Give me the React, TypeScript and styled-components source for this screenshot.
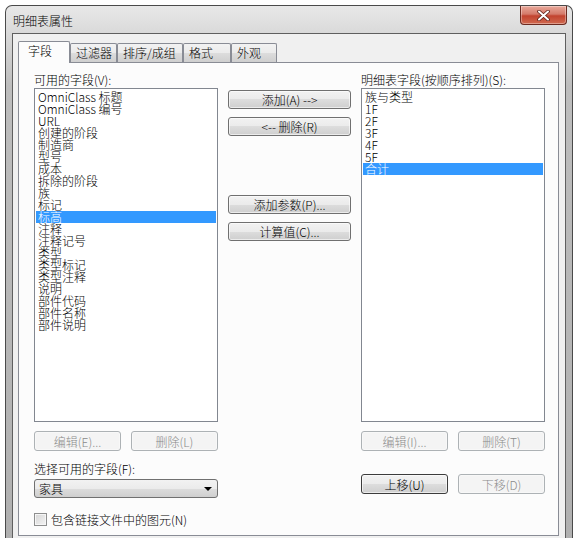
import React from 'react';
import styled, { createGlobalStyle } from 'styled-components';

const GlobalStyle = createGlobalStyle`
  html, body {
    margin: 0;
    padding: 0;
    background: #ffffff;
    overflow: hidden;
  }

  body {
    font-family: "Noto Sans CJK SC", "Liberation Sans", sans-serif;
    font-size: 12px;
    font-weight: 300;
    color: #000000;
  }
`;

const Window = styled.div`
  box-sizing: border-box;
  display: flex;
  flex-direction: column;
  width: 568px;
  height: 545px;
  margin: 5px 0 0 5px;
  padding: 0 6px;
  border: 1px solid #4a4a4a;
  border-bottom: none;
  border-radius: 7px 7px 0 0;
  background: linear-gradient(180deg, #e8e8e8 0px, #d9d9d9 28px, #bdbdbd 80px, #b0b0b0 100%);
`;

const TitleBar = styled.div`
  display: flex;
  justify-content: space-between;
  align-items: flex-start;
  height: 27px;
  margin-right: -1px;
`;

const Title = styled.div`
  padding: 8px 0 0 1px;
  line-height: 14px;
  font-size: 12px;
`;

const CloseButton = styled.div`
  display: flex;
  align-items: center;
  justify-content: center;
  width: 47px;
  height: 19px;
  box-sizing: border-box;
  border: 1px solid #6b2a20;
  border-top: none;
  border-radius: 0 0 4px 4px;
  background: linear-gradient(180deg, #e9a99b 0%, #d47a6a 45%, #c2432f 55%, #d06a50 100%);
  box-shadow: inset 0 0 0 1px rgba(255, 255, 255, 0.35);
`;

const Client = styled.div`
  flex: 1;
  box-sizing: border-box;
  padding: 7px 6px 0 5px;
  border: 1px solid #5f5f5f;
  border-bottom: none;
  background: #f0f0f0;
`;

const TabRow = styled.div`
  display: flex;
  align-items: flex-end;
  height: 21px;
`;

const Tab = styled.div<{ $active?: boolean; $width: number }>`
  position: relative;
  box-sizing: border-box;
  width: ${p => p.$width}px;
  height: ${p => (p.$active ? 22 : 19)}px;
  margin-bottom: ${p => (p.$active ? -1 : 0)}px;
  padding-left: ${p => (p.$active ? 9 : 5)}px;
  border: 1px solid #898c95;
  border-bottom: none;
  border-radius: 2px 2px 0 0;
  line-height: ${p => (p.$active ? 18 : 17)}px;
  white-space: nowrap;
  z-index: ${p => (p.$active ? 1 : 0)};
  background: ${p =>
    p.$active
      ? '#fcfcfc'
      : 'linear-gradient(180deg, #f2f2f2 0%, #ebebeb 50%, #dddddd 50%, #cfcfcf 100%)'};
`;

const Panel = styled.div`
  box-sizing: border-box;
  display: grid;
  grid-template-columns: 184px 123px 184px;
  column-gap: 10px;
  width: 541px;
  height: 474px;
  padding: 10px 12px 0 15px;
  border: 1px solid #898c95;
  background: #fcfcfc;
`;

const Column = styled.div<{ $top?: number }>`
  display: flex;
  flex-direction: column;
  padding-top: ${p => p.$top ?? 0}px;
`;

const Label = styled.div<{ $gap?: number }>`
  height: 15px;
  margin-top: ${p => p.$gap ?? 0}px;
  line-height: 14px;
  white-space: nowrap;
`;

const ListBox = styled.div`
  box-sizing: border-box;
  height: 334px;
  padding: 2px 1px;
  border: 1px solid #828790;
  background: #ffffff;
  overflow: hidden;
`;

const Item = styled.div<{ $selected?: boolean }>`
  height: 12px;
  padding-left: 2px;
  line-height: 12px;
  font-size: 12px;
  white-space: nowrap;
  color: ${p => (p.$selected ? '#ffffff' : '#000000')};
  background: ${p => (p.$selected ? '#3399ff' : 'transparent')};
`;

const Button = styled.div<{ $disabled?: boolean; $height?: number; $gap?: number; $strong?: boolean }>`
  box-sizing: border-box;
  display: flex;
  align-items: center;
  justify-content: center;
  height: ${p => p.$height ?? 19}px;
  margin-top: ${p => p.$gap ?? 0}px;
  border: 1px solid ${p => (p.$disabled ? '#adb2b5' : p.$strong ? '#3c3c3c' : '#707070')};
  border-radius: 3px;
  white-space: nowrap;
  color: ${p => (p.$disabled ? '#8a8a8a' : '#000000')};
  background: ${p =>
    p.$disabled
      ? '#f4f4f4'
      : 'linear-gradient(180deg, #f2f2f2 0%, #ebebeb 50%, #dddddd 50%, #cfcfcf 100%)'};
  box-shadow: inset 0 0 0 1px ${p => (p.$disabled ? '#f8f8f8' : 'rgba(255, 255, 255, 0.6)')};
`;

const ButtonPair = styled.div<{ $gap: number }>`
  display: grid;
  grid-template-columns: 1fr 1fr;
  column-gap: 10px;
  margin-top: ${p => p.$gap}px;
`;

const Dropdown = styled.div`
  box-sizing: border-box;
  display: flex;
  align-items: center;
  justify-content: space-between;
  height: 19px;
  margin-top: 2px;
  padding: 0 4px 0 4px;
  border: 1px solid #707070;
  border-radius: 3px;
  background: linear-gradient(180deg, #f2f2f2 0%, #ebebeb 50%, #dddddd 50%, #cfcfcf 100%);
`;

const Arrow = styled.span`
  width: 0;
  height: 0;
  margin-right: 1px;
  border-left: 4px solid transparent;
  border-right: 4px solid transparent;
  border-top: 4px solid #000000;
`;

const CheckRow = styled.div`
  display: flex;
  align-items: center;
  gap: 4px;
  margin-top: 15px;
  height: 13px;
  line-height: 13px;
  white-space: nowrap;
`;

const CheckBox = styled.span`
  box-sizing: border-box;
  width: 13px;
  height: 13px;
  border: 1px solid #8e8f8f;
  background: linear-gradient(135deg, #d6d6d6 0%, #f4f4f4 100%);
  box-shadow: inset 0 0 0 1px #f6f6f6;
`;

const available = [
  'OmniClass 标题',
  'OmniClass 编号',
  'URL',
  '创建的阶段',
  '制造商',
  '型号',
  '成本',
  '拆除的阶段',
  '族',
  '标记',
  '标高',
  '注释',
  '注释记号',
  '类型',
  '类型标记',
  '类型注释',
  '说明',
  '部件代码',
  '部件名称',
  '部件说明'
];

const scheduled = ['族与类型', '1F', '2F', '3F', '4F', '5F', '合计'];

const tabs = [
  { name: '字段', width: 52, active: true },
  { name: '过滤器', width: 47 },
  { name: '排序/成组', width: 66 },
  { name: '格式', width: 48 },
  { name: '外观', width: 46 }
];

function CloseGlyph () {
  return (
    <svg width='13' height='11' viewBox='0 0 13 11'>
      <path d='M2 1.5 L11 9.5 M11 1.5 L2 9.5' stroke='#5a2018' strokeWidth='3.6' strokeLinecap='round' />
      <path d='M2 1.5 L11 9.5 M11 1.5 L2 9.5' stroke='#ffffff' strokeWidth='2' strokeLinecap='round' />
    </svg>
  );
}

export default function App () {
  return (
    <>
      <GlobalStyle />
      <Window>
        <TitleBar>
          <Title>明细表属性</Title>
          <CloseButton><CloseGlyph /></CloseButton>
        </TitleBar>
        <Client>
          <TabRow>
            {tabs.map(t => (
              <Tab key={t.name} $active={t.active} $width={t.width}>{t.name}</Tab>
            ))}
          </TabRow>
          <Panel>
            <Column>
              <Label>可用的字段(V):</Label>
              <ListBox>
                {available.map(name => (
                  <Item key={name} $selected={name === '标高'}>{name}</Item>
                ))}
              </ListBox>
              <ButtonPair $gap={9}>
                <Button $disabled $height={20}>编辑(E)...</Button>
                <Button $disabled $height={20}>删除(L)</Button>
              </ButtonPair>
              <Label $gap={11}>选择可用的字段(F):</Label>
              <Dropdown>
                <span>家具</span>
                <Arrow />
              </Dropdown>
              <CheckRow>
                <CheckBox />
                <span>包含链接文件中的图元(N)</span>
              </CheckRow>
            </Column>

            <Column $top={17}>
              <Button>添加(A) --&gt;</Button>
              <Button $gap={8}>{'<-- 删除(R)'}</Button>
              <Button $gap={59}>添加参数(P)...</Button>
              <Button $gap={8}>计算值(C)...</Button>
            </Column>

            <Column>
              <Label>明细表字段(按顺序排列)(S):</Label>
              <ListBox>
                {scheduled.map(name => (
                  <Item key={name} $selected={name === '合计'}>{name}</Item>
                ))}
              </ListBox>
              <ButtonPair $gap={9}>
                <Button $disabled $height={20}>编辑(I)...</Button>
                <Button $disabled $height={20}>删除(T)</Button>
              </ButtonPair>
              <ButtonPair $gap={23}>
                <Button $strong $height={20}>上移(U)</Button>
                <Button $disabled $height={20}>下移(D)</Button>
              </ButtonPair>
            </Column>
          </Panel>
        </Client>
      </Window>
    </>
  );
}
